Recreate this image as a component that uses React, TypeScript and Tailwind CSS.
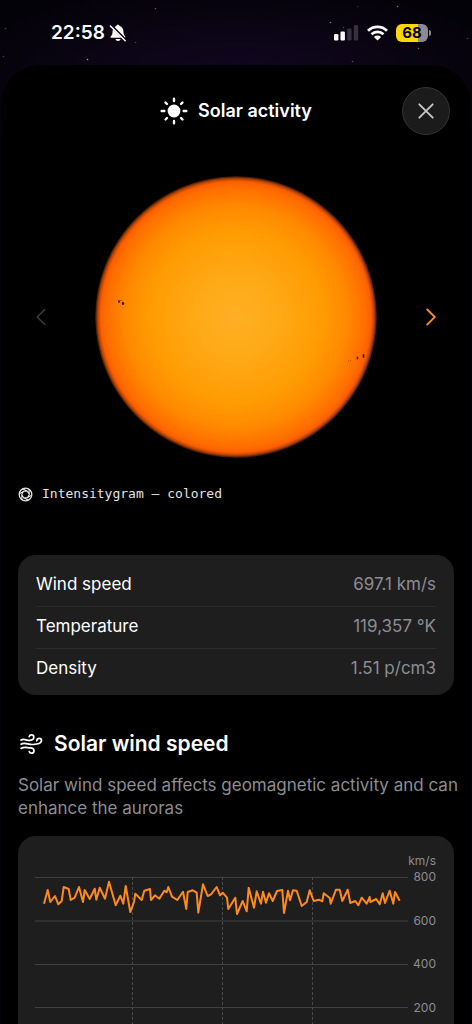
import React from "react";

const readings = [
  { label: "Wind speed", value: "697.1 km/s" },
  { label: "Temperature", value: "119,357 °K" },
  { label: "Density", value: "1.51 p/cm3" },
];

const axisLabels = ["800", "600", "400", "200"];

const windSpeedPoints =
  "9,26.7 12.7,13 15.3,25 20,19 23.3,27.3 26.7,24 28.7,10 33.7,12 35.7,23 39.7,20.7 44,10 48,25 49.7,13 54.7,22 59.7,11.7 61.3,22.7 64.7,10.7 70,21.7 74,4.7 80.7,28.3 85.3,18.7 88.3,26.7 90.7,9 95.3,35 99,25 100.3,16.7 106.7,23 109.3,13.7 115,12 116,23 120,18.3 124.3,21.7 129.3,13.7 131.7,15.3 133.3,10 137,19.7 142.3,23 148,14.7 151.3,32 152.7,15 157.7,13.3 161.7,15.7 163.3,35.7 168,7.3 172.7,19 176,17.3 181.7,10 185,18.3 187.7,15.7 192,20.7 193.3,32 200.3,20.7 202,37 207.7,24 211.7,34.3 213.7,10.7 219,30.7 221.7,14.3 226,26.7 228,14.7 231,25.7 234,16.3 237.7,24 242,14 247.3,13 249,36 253,13.7 255,23.3 258,13.3 261.7,13.7 266.7,29 271.7,25 274.7,13.3 278.7,24 284,22.7 287.3,24.3 288.7,16.3 294.7,21 295.7,26.7 301,12.7 304.7,12.7 307.3,24 312.7,12.7 315.3,26 320.3,24 323.3,28.3 326.7,20.7 331.7,26.7 334.7,20 335.3,25 341.3,22 344.7,27.3 347.7,16.3 350,26 354.7,13.7 358.3,26.7 360,15 364.7,23.7";

const stars = [
  [5, 28, 0.25],
  [3, 56, 0.25],
  [87, 59, 0.6],
  [155, 8, 0.35],
  [135, 42, 0.25],
  [397, 6, 0.5],
  [357, 6, 0.2],
  [330, 22, 0.5],
  [343, 27, 0.25],
  [418, 48, 0.4],
  [352, 61, 0.3],
  [467, 38, 0.25],
];

function StarField() {
  return (
    <svg className="absolute inset-x-0 top-0 h-28 w-full" viewBox="0 0 472 112" preserveAspectRatio="xMidYMin slice" aria-hidden="true">
      {stars.map(([x, y, o]) => (
        <circle key={`${x}-${y}`} cx={x + 0.5} cy={y + 0.5} r="0.8" fill="#fff" opacity={o} />
      ))}
    </svg>
  );
}

function BellOff() {
  return (
    <svg width="18" height="18" viewBox="0 0 18 18" aria-hidden="true">
      <path
        d="M9 .8c.9 0 1.500.6 1.600 1.300 2.400.7 3.700 2.600 3.800 5.100.1 2.900.5 3.800 1.700 5 .5.500.5 1.600-.6 1.600H2.500c-1.100 0-1.100-1.100-.6-1.600 1.200-1.200 1.600-2.100 1.700-5 .1-2.500 1.400-4.400 3.800-5.100C7.500 1.400 8.100.8 9 .8Z"
        fill="#fff"
      />
      <path d="M6.400 15h5.200c-.3 1.300-1.200 2-2.600 2s-2.300-.7-2.600-2Z" fill="#fff" />
      <path d="M2 1.500 17.200 16.700" stroke="#0a0512" strokeWidth="2.800" />
      <path d="M1.400 2 16.200 16.800" stroke="#fff" strokeWidth="1.500" strokeLinecap="round" />
    </svg>
  );
}

function Signal() {
  return (
    <svg width="25" height="16" viewBox="0 0 25 16" aria-hidden="true">
      <rect x="0" y="9" width="4.400" height="6.500" rx="1.200" fill="#fff" />
      <rect x="6.500" y="6.500" width="4.400" height="9" rx="1.200" fill="#fff" />
      <rect x="13.200" y="3.500" width="4.400" height="12" rx="1.200" fill="#37303f" />
      <rect x="19.800" y="0" width="4.400" height="15.500" rx="1.200" fill="#37303f" />
    </svg>
  );
}

function Wifi() {
  return (
    <svg width="21" height="16" viewBox="0 0 21 16" aria-hidden="true">
      <g fill="none" stroke="#fff" strokeWidth="2.700">
        <path d="M1 5.700a13.600 13.600 0 0 1 19 0" />
        <path d="M4.500 9.300a8.700 8.700 0 0 1 12 0" />
      </g>
      <path d="M10.500 15.500 6.900 11.900a5.200 5.200 0 0 1 7.200 0Z" fill="#fff" />
    </svg>
  );
}

function Battery() {
  return (
    <div className="flex items-center gap-px" role="img" aria-label="Battery 68 percent">
      <div className="flex h-[18px] w-8 items-center justify-center rounded-md bg-linear-to-r from-[#ffd60a] from-68% to-[#8e8a93] to-68% text-[15px] leading-none font-bold text-black">
        68
      </div>
      <div className="h-1.5 w-0.5 rounded-r-full bg-[#8e8a93]" />
    </div>
  );
}

function SunIcon() {
  return (
    <svg width="28" height="28" viewBox="0 0 28 28" aria-hidden="true">
      <circle cx="14" cy="14" r="6.400" fill="#fff" />
      <g stroke="#fff" strokeWidth="2.400" strokeLinecap="round">
        <path d="M14 1.700v2.300M14 24v2.300M1.700 14h2.600M23.700 14h2.600M5.500 5.500l1.500 1.500M21 21l1.500 1.500M5.500 22.500 7 21M21 7l1.500-1.500" />
      </g>
    </svg>
  );
}

function WindIcon() {
  return (
    <svg width="26" height="24" viewBox="0 0 26 24" fill="none" stroke="#fff" strokeWidth="1.700" strokeLinecap="round" strokeLinejoin="round" aria-hidden="true">
      <path d="M3 8c3.500-2 5.500.8 9 .4 2.700-.3 3.800-1.700 3.800-3.200 0-1.400-1-2.300-2.300-2.300-1.200 0-2 .7-2.300 1.700" />
      <path d="M3 12.200c4-2.300 6.800.5 12 .3 5-.2 8.500-1.400 8.500-3.900 0-1.300-1-2.200-2.200-2.200-1.500 0-2.400 1-2.500 2.400" />
      <path d="M3 16.400c3.500-2 6-.6 9.200-.6 2.400 0 3.800 1.100 3.800 2.900 0 1.500-1.100 2.500-2.500 2.500-1.200 0-2-.7-2.300-1.700" />
    </svg>
  );
}

function ApertureIcon() {
  return (
    <svg width="15" height="15" viewBox="0 0 15 15" fill="none" stroke="#e4e4e4" strokeWidth="1.100" strokeLinecap="round" aria-hidden="true">
      <circle cx="7.500" cy="7.500" r="6.300" strokeWidth="1.300" />
      <path d="M5.600 4.200h3.800l1.900 3.300-1.900 3.300H5.600L3.700 7.500ZM9.400 4.200 5 1.900M11.300 7.500 11 2.500M9.400 10.800l4.200-2.700M5.600 10.800l4.400 2.300M3.700 7.500l.3 5M5.600 4.200 1.400 6.900" />
    </svg>
  );
}

function SunDisc() {
  return (
    <svg className="size-[282px]" viewBox="0 0 282 282" role="img" aria-label="The Sun, colored intensitygram">
      <defs>
        <radialGradient id="disc">
          <stop offset="0" stopColor="#ffb026" />
          <stop offset="0.3" stopColor="#ffa915" />
          <stop offset="0.6" stopColor="#ff9c03" />
          <stop offset="0.78" stopColor="#ff8a00" />
          <stop offset="0.92" stopColor="#ff6e00" />
          <stop offset="0.96" stopColor="#fb5f00" />
          <stop offset="0.98" stopColor="#b84403" />
          <stop offset="0.995" stopColor="#4a1c02" />
          <stop offset="1" stopColor="#1a0900" />
        </radialGradient>
      </defs>
      <circle cx="141" cy="141" r="141" fill="url(#disc)" />
      <g fill="#431300">
        <ellipse cx="24" cy="125.500" rx="0.900" ry="1.600" />
        <ellipse cx="28" cy="127.500" rx="1.200" ry="1.800" />
        <circle cx="26" cy="124.500" r="0.700" opacity="0.6" />
        <ellipse cx="262.500" cy="182" rx="0.900" ry="1.600" />
        <ellipse cx="268.500" cy="180" rx="1" ry="1.900" />
        <circle cx="253.500" cy="185" r="0.500" opacity="0.5" />
        <circle cx="255.500" cy="184.500" r="0.500" opacity="0.5" />
      </g>
    </svg>
  );
}

function Chart() {
  return (
    <div className="rounded-[18px] bg-[#1e1e1e] pt-4 pr-[18px] pb-6 pl-[17px] text-[12px] text-[#8d8d93]">
      <div className="h-[25px] text-right leading-[18px]">km/s</div>
      <div className="flex h-[174px] gap-1">
        <svg className="h-full min-w-0 flex-1 overflow-visible" viewBox="0 0 373 174" preserveAspectRatio="none" role="img" aria-label="Solar wind speed over time">
          <g stroke="#414141" strokeWidth="1">
            {[0.5, 44, 87.5, 130.5, 174].map((y) => (
              <path key={y} d={`M0 ${y}H373`} vectorEffect="non-scaling-stroke" />
            ))}
          </g>
          <g stroke="#4a4a4a" strokeWidth="1" strokeDasharray="3 2">
            {[97.5, 187.5, 277.5].map((x) => (
              <path key={x} d={`M${x} 0V174`} vectorEffect="non-scaling-stroke" />
            ))}
          </g>
          <polyline points={windSpeedPoints} fill="none" stroke="#ff8a1c" strokeWidth="2" strokeLinejoin="round" vectorEffect="non-scaling-stroke" />
        </svg>
        <div className="-mt-2 grid h-full w-6 grid-rows-4 text-right leading-4">
          {axisLabels.map((label) => (
            <span key={label}>{label}</span>
          ))}
        </div>
      </div>
    </div>
  );
}

export default function App() {
  return (
    <div className="relative flex h-screen flex-col overflow-hidden bg-[#040209] bg-[radial-gradient(ellipse_60%_100px_at_50%_85px,#130722,#040209)] font-['Inter','Liberation_Sans',sans-serif] text-white">
      <StarField />
      <div className="relative flex h-[65px] shrink-0 items-center justify-between pr-[41px] pl-[51px]">
        <div className="flex items-center gap-1">
          <span className="text-[19px] leading-6 font-semibold">22:58</span>
          <BellOff />
        </div>
        <div className="flex items-center gap-2">
          <Signal />
          <Wifi />
          <Battery />
        </div>
      </div>

      <main className="relative mx-px min-h-0 flex-1 overflow-y-auto rounded-t-[40px] bg-black px-[17px] pt-[22px] [scrollbar-width:none]">
        <header className="grid h-12 grid-cols-[48px_1fr_48px] items-center px-1">
          <h1 className="col-start-2 flex items-center justify-center gap-2.5 text-[18px] leading-6 font-semibold">
            <SunIcon />
            Solar activity
          </h1>
          <button type="button" aria-label="Close" className="flex size-12 items-center justify-center rounded-full border border-[#333] bg-[#1b1b1b]">
            <svg width="16" height="16" viewBox="0 0 16 16" stroke="#c9c9c9" strokeWidth="1.800" strokeLinecap="round" aria-hidden="true">
              <path d="M1.300 1.300l13.400 13.400M14.700 1.300 1.300 14.700" />
            </svg>
          </button>
        </header>

        <section className="mt-[41px] flex items-center justify-between px-4">
          <button type="button" aria-label="Previous image" disabled className="flex h-10 w-3.5 items-center justify-center">
            <svg width="10" height="18" viewBox="0 0 10 18" fill="none" stroke="#3d3d3d" strokeWidth="1.600" strokeLinecap="round" strokeLinejoin="round" aria-hidden="true">
              <path d="M8.800 1.500 1.200 9l7.600 7.500" />
            </svg>
          </button>
          <SunDisc />
          <button type="button" aria-label="Next image" className="flex h-10 w-3.5 items-center justify-center">
            <svg width="10" height="18" viewBox="0 0 10 18" fill="none" stroke="#ff8a1c" strokeWidth="1.800" strokeLinecap="round" strokeLinejoin="round" aria-hidden="true">
              <path d="M1.200 1.500 8.800 9l-7.600 7.500" />
            </svg>
          </button>
        </section>

        <p className="mt-[26px] flex h-5 items-center gap-[9px] font-['DejaVu_Sans_Mono',monospace] text-[13px] text-[#e4e4e4]">
          <ApertureIcon />
          Intensitygram – colored
        </p>

        <dl className="mt-[51px] rounded-[18px] bg-[#1e1e1e] px-[18px] pt-2.5 pb-1 text-[17px]">
          {readings.map(({ label, value }) => (
            <div key={label} className="flex h-[42px] items-center justify-between border-b border-[#2b2b2b] pb-px last:border-transparent">
              <dt>{label}</dt>
              <dd className="text-[#8d8d93]">{value}</dd>
            </div>
          ))}
        </dl>

        <section className="mt-[37px]">
          <h2 className="flex h-6 items-center gap-2.5 text-[21px] font-semibold">
            <WindIcon />
            Solar wind speed
          </h2>
          <p className="-mr-2 mt-[18px] mb-4 text-[17px] leading-[23px] text-[#8d8d93]">
            Solar wind speed affects geomagnetic activity and can enhance the auroras
          </p>
          <Chart />
        </section>
      </main>
    </div>
  );
}
